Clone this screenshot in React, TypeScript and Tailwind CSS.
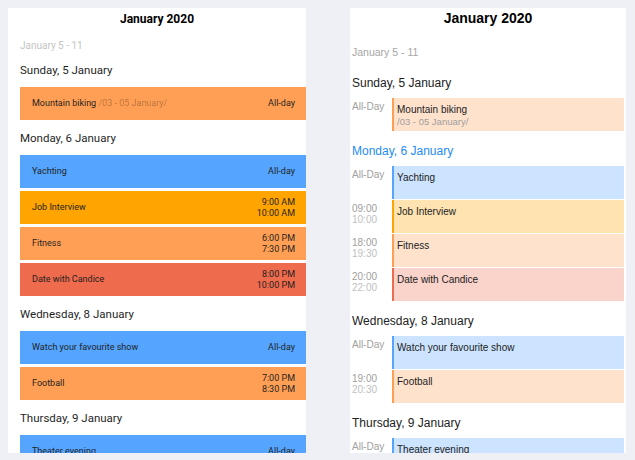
type LeftEvent = { title: string; sub?: string; start?: string; end?: string; color: string };
type RightEvent = { title: string; sub?: string; start?: string; end?: string; bg: string; border: string };

const leftDays: { day: string; events: LeftEvent[] }[] = [
  {
    day: "Sunday, 5 January",
    events: [{ title: "Mountain biking", sub: "/03 - 05 January/", color: "bg-[#ff9f55]" }],
  },
  {
    day: "Monday, 6 January",
    events: [
      { title: "Yachting", color: "bg-[#55a5ff]" },
      { title: "Job Interview", start: "9:00 AM", end: "10:00 AM", color: "bg-[#ffa400]" },
      { title: "Fitness", start: "6:00 PM", end: "7:30 PM", color: "bg-[#ff9f55]" },
      { title: "Date with Candice", start: "8:00 PM", end: "10:00 PM", color: "bg-[#ee6b4e]" },
    ],
  },
  {
    day: "Wednesday, 8 January",
    events: [
      { title: "Watch your favourite show", color: "bg-[#55a5ff]" },
      { title: "Football", start: "7:00 PM", end: "8:30 PM", color: "bg-[#ff9f55]" },
    ],
  },
  {
    day: "Thursday, 9 January",
    events: [{ title: "Theater evening", color: "bg-[#55a5ff]" }],
  },
];

const blue = { bg: "bg-[#cce4ff]", border: "border-[#55a5ff]" };
const orange = { bg: "bg-[#ffe2cc]", border: "border-[#ff9f55]" };
const amber = { bg: "bg-[#ffe4b2]", border: "border-[#ffa400]" };
const red = { bg: "bg-[#fad3ca]", border: "border-[#ee6b4e]" };

const rightDays: { day: string; today?: boolean; events: RightEvent[] }[] = [
  {
    day: "Sunday, 5 January",
    events: [{ title: "Mountain biking", sub: "/03 - 05 January/", ...orange }],
  },
  {
    day: "Monday, 6 January",
    today: true,
    events: [
      { title: "Yachting", ...blue },
      { title: "Job Interview", start: "09:00", end: "10:00", ...amber },
      { title: "Fitness", start: "18:00", end: "19:30", ...orange },
      { title: "Date with Candice", start: "20:00", end: "22:00", ...red },
    ],
  },
  {
    day: "Wednesday, 8 January",
    events: [
      { title: "Watch your favourite show", ...blue },
      { title: "Football", start: "19:00", end: "20:30", ...orange },
    ],
  },
  {
    day: "Thursday, 9 January",
    events: [{ title: "Theater evening", ...blue }],
  },
];

function MaterialAgenda() {
  return (
    <div className="w-[298px] h-[445px] overflow-hidden bg-white font-['Roboto',sans-serif] text-[#1f1f1f]">
      <div className="h-[22px] leading-[22px] text-center text-[12px] font-bold text-black">January 2020</div>
      <div className="mt-[10px] h-[12px] leading-[12px] pl-[12px] text-[10px] text-[#c4c4c4]">January 5 - 11</div>
      {leftDays.map((d) => (
        <div key={d.day} className="pl-[12px]">
          <div className="h-[35px] pt-[2px] flex items-center text-[11.5px]">{d.day}</div>
          <div className="flex flex-col gap-[3px]">
            {d.events.map((e) => (
              <div
                key={e.title}
                className={`${e.color} h-[33px] shrink-0 flex items-center justify-between pl-[12px] pr-[11px] text-[9px]`}
              >
                <div>
                  {e.title}
                  {e.sub && <span className="text-black/30"> {e.sub}</span>}
                </div>
                {e.start ? (
                  <div className="text-right leading-[11px]">
                    <div>{e.start}</div>
                    <div>{e.end}</div>
                  </div>
                ) : (
                  <div>All-day</div>
                )}
              </div>
            ))}
          </div>
        </div>
      ))}
    </div>
  );
}

function IosAgenda() {
  return (
    <div className="w-[276px] h-[445px] overflow-hidden bg-white pl-[2px] pr-[2px] font-['Liberation_Sans',Arial,sans-serif] text-[#222]">
      <div className="h-[20px] leading-[20px] text-center text-[14px] font-bold text-black">January 2020</div>
      <div className="h-[35px] pt-[18px] leading-[12px] text-[10.5px] text-[#a6a6a6]">January 5 - 11</div>
      {rightDays.map((d) => (
        <div key={d.day}>
          <div className={`h-[35px] pt-[12px] leading-[16px] text-[12px] ${d.today ? "text-[#1e8cf5]" : "text-[#222]"}`}>
            {d.day}
          </div>
          <div className="flex flex-col gap-[1px]">
            {d.events.map((e) => (
              <div key={e.title} className="flex h-[33px] shrink-0">
                <div className="w-[40px] shrink-0 pt-[3px] text-[10px] leading-[11px]">
                  {e.start ? (
                    <>
                      <div className="text-[#a0a0a0]">{e.start}</div>
                      <div className="text-[#c0c0c0]">{e.end}</div>
                    </>
                  ) : (
                    <div className="text-[#a0a0a0]">All-Day</div>
                  )}
                </div>
                <div className={`flex-1 ${e.bg} border-l-2 ${e.border} pl-[3px] pt-[5px] text-[10px] leading-[13px]`}>
                  <div>{e.title}</div>
                  {e.sub && <div className="text-[9.5px] leading-[11px] text-[#a0a0a0]">{e.sub}</div>}
                </div>
              </div>
            ))}
          </div>
        </div>
      ))}
    </div>
  );
}

export default function App() {
  return (
    <div className="w-[635px] h-[460px] bg-[#eff0f5] flex pt-[8px] pl-[8px] gap-[44px] overflow-hidden">
      <MaterialAgenda />
      <IosAgenda />
    </div>
  );
}
